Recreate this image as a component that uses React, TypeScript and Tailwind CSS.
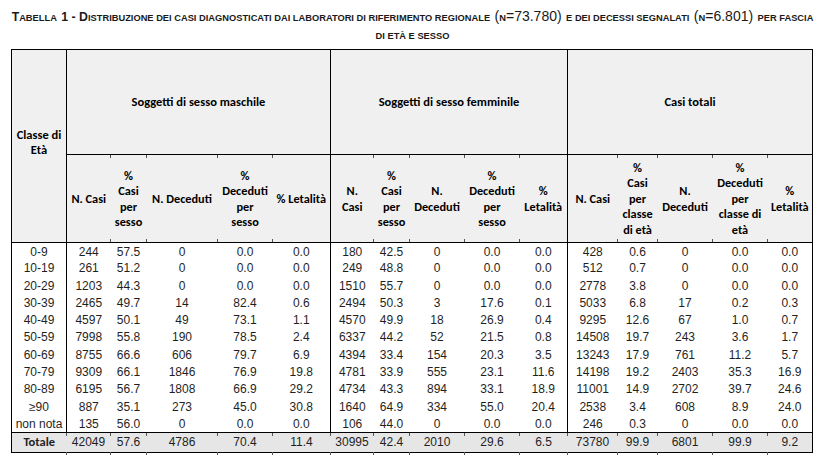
import React from 'react';

type Row = string[];

const rows: Row[] = [
  ['0-9', '244', '57.5', '0', '0.0', '0.0', '180', '42.5', '0', '0.0', '0.0', '428', '0.6', '0', '0.0', '0.0'],
  ['10-19', '261', '51.2', '0', '0.0', '0.0', '249', '48.8', '0', '0.0', '0.0', '512', '0.7', '0', '0.0', '0.0'],
  ['20-29', '1203', '44.3', '0', '0.0', '0.0', '1510', '55.7', '0', '0.0', '0.0', '2778', '3.8', '0', '0.0', '0.0'],
  ['30-39', '2465', '49.7', '14', '82.4', '0.6', '2494', '50.3', '3', '17.6', '0.1', '5033', '6.8', '17', '0.2', '0.3'],
  ['40-49', '4597', '50.1', '49', '73.1', '1.1', '4570', '49.9', '18', '26.9', '0.4', '9295', '12.6', '67', '1.0', '0.7'],
  ['50-59', '7998', '55.8', '190', '78.5', '2.4', '6337', '44.2', '52', '21.5', '0.8', '14508', '19.7', '243', '3.6', '1.7'],
  ['60-69', '8755', '66.6', '606', '79.7', '6.9', '4394', '33.4', '154', '20.3', '3.5', '13243', '17.9', '761', '11.2', '5.7'],
  ['70-79', '9309', '66.1', '1846', '76.9', '19.8', '4781', '33.9', '555', '23.1', '11.6', '14198', '19.2', '2403', '35.3', '16.9'],
  ['80-89', '6195', '56.7', '1808', '66.9', '29.2', '4734', '43.3', '894', '33.1', '18.9', '11001', '14.9', '2702', '39.7', '24.6'],
  ['≥90', '887', '35.1', '273', '45.0', '30.8', '1640', '64.9', '334', '55.0', '20.4', '2538', '3.4', '608', '8.9', '24.0'],
  ['non nota', '135', '56.0', '0', '0.0', '0.0', '106', '44.0', '0', '0.0', '0.0', '246', '0.3', '0', '0.0', '0.0'],
];

const totale: Row = ['Totale', '42049', '57.6', '4786', '70.4', '11.4', '30995', '42.4', '2010', '29.6', '6.5', '73780', '99.9', '6801', '99.9', '9.2'];

// widths of the 16 columns, in px
const widths = [55, 44, 36, 71, 55, 58, 43, 36, 55, 55, 48, 50, 40, 55, 55, 45];

const subHeaders: string[][] = [
  ['N. Casi'],
  ['%', 'Casi', 'per', 'sesso'],
  ['N. Deceduti'],
  ['%', 'Deceduti', 'per', 'sesso'],
  ['% Letalità'],
  ['N.', 'Casi'],
  ['%', 'Casi', 'per', 'sesso'],
  ['N.', 'Deceduti'],
  ['%', 'Deceduti', 'per', 'sesso'],
  ['%', 'Letalità'],
  ['N. Casi'],
  ['%', 'Casi', 'per', 'classe', 'di età'],
  ['N.', 'Deceduti'],
  ['%', 'Deceduti', 'per', 'classe di', 'età'],
  ['%', 'Letalità'],
];

const headFont = { fontFamily: 'Carlito, Lato, "Open Sans", sans-serif' };
const dataFont = { fontFamily: '"Liberation Sans", Arial, sans-serif' };
const titleFont = { fontFamily: '"Liberation Sans", Tahoma, Arial, sans-serif' };

function Tick({ pos }: { pos: 'top' | 'bottom' | 'below' }) {
  const place = pos === 'top' ? 'top-0' : pos === 'bottom' ? 'bottom-0' : 'top-full';
  return <span className={`absolute left-[-1px] ${place} h-[3px] w-px bg-[#555]`} />;
}

// small caps written by hand so the ratio can be tuned
function Sc({ children }: { children: React.ReactNode }) {
  return <span className="uppercase text-[9.3px]">{children}</span>;
}
function Cap({ children }: { children: React.ReactNode }) {
  return <span className="text-[12.3px]">{children}</span>;
}
function Num({ children }: { children: React.ReactNode }) {
  return <span className="font-normal text-[14px]">{children}</span>;
}

export default function App() {
  return (
    <div className="w-[825px] h-[461px] bg-white overflow-hidden">
      {/* Title */}
      <div className="h-[49px] pt-[8px] text-center font-bold text-[#1a1a1a] leading-[15px] whitespace-nowrap" style={titleFont}>
        <Cap>T</Cap><Sc>abella</Sc> <Cap>1 - D</Cap><Sc>istribuzione dei casi diagnosticati dai laboratori di riferimento regionale</Sc>{' '}
        <Num>(</Num><Sc>n</Sc><Num>=73.780)</Num> <Sc>e dei decessi segnalati</Sc> <Num>(</Num><Sc>n</Sc><Num>=6.801)</Num> <Sc>per fascia</Sc>
        <br />
        <Sc>di età e sesso</Sc>
      </div>

      {/* Table */}
      <table className="ml-[11px] w-[802px] table-fixed border-collapse text-black">
        <colgroup>
          {widths.map((w, i) => (
            <col key={i} style={{ width: w }} />
          ))}
        </colgroup>
        <thead className="bg-[#f0f0f0]" style={headFont}>
          <tr className="h-[105px]">
            <th rowSpan={2} className="border border-black text-[12.5px] font-bold leading-[15px] align-middle pb-[8px]">
              Classe di
              <br />
              Età
            </th>
            <th colSpan={5} className="border border-black text-[12.5px] font-bold align-middle">
              Soggetti di sesso maschile
            </th>
            <th colSpan={5} className="border border-black text-[12.5px] font-bold align-middle">
              Soggetti di sesso femminile
            </th>
            <th colSpan={5} className="border border-black text-[12.5px] font-bold align-middle">
              Casi totali
            </th>
          </tr>
          <tr className="h-[88px]">
            {subHeaders.map((lines, i) => {
              const groupEnd = i % 5 === 4;
              const groupStart = i % 5 === 0;
              return (
                <th
                  key={i}
                  className={`relative p-0 text-[12.3px] font-bold leading-[15.5px] align-middle whitespace-nowrap border-t border-b border-black ${
                    groupEnd ? 'border-r' : ''
                  }`}
                >
                  {!groupStart && <Tick pos="top" />}
                  {!groupStart && <Tick pos="bottom" />}
                  {lines.map((l, j) => (
                    <React.Fragment key={j}>
                      {j > 0 && <br />}
                      {l}
                    </React.Fragment>
                  ))}
                </th>
              );
            })}
          </tr>
        </thead>
        <tbody className="text-[12px] text-[#1f1f1f]" style={dataFont}>
          {rows.map((r, ri) => (
            <tr key={ri} className="h-[17.27px]">
              {r.map((v, i) => (
                <td
                  key={i}
                  className={`p-0 text-center leading-[14px] whitespace-nowrap ${i === 0 ? 'border-l border-r border-black' : ''} ${
                    i > 0 && i % 5 === 0 ? 'border-r border-black' : ''
                  } ${ri === 0 ? 'pt-[2px]' : ''}`}
                >
                  {v}
                </td>
              ))}
            </tr>
          ))}
          <tr className="h-[20px] bg-[#e6e6e6]">
            {totale.map((v, i) => (
              <td
                key={i}
                className={`relative p-0 text-center whitespace-nowrap border-t border-b border-black ${i === 0 ? 'border-l' : ''} ${
                  i === 15 ? 'border-r' : ''
                }`}
              >
                {i > 0 && <Tick pos="top" />}
                {i > 0 && <Tick pos="below" />}
                {i === 0 ? (
                  <span className="font-bold text-[12.5px]" style={headFont}>
                    {v}
                  </span>
                ) : (
                  v
                )}
              </td>
            ))}
          </tr>
        </tbody>
      </table>
    </div>
  );
}
